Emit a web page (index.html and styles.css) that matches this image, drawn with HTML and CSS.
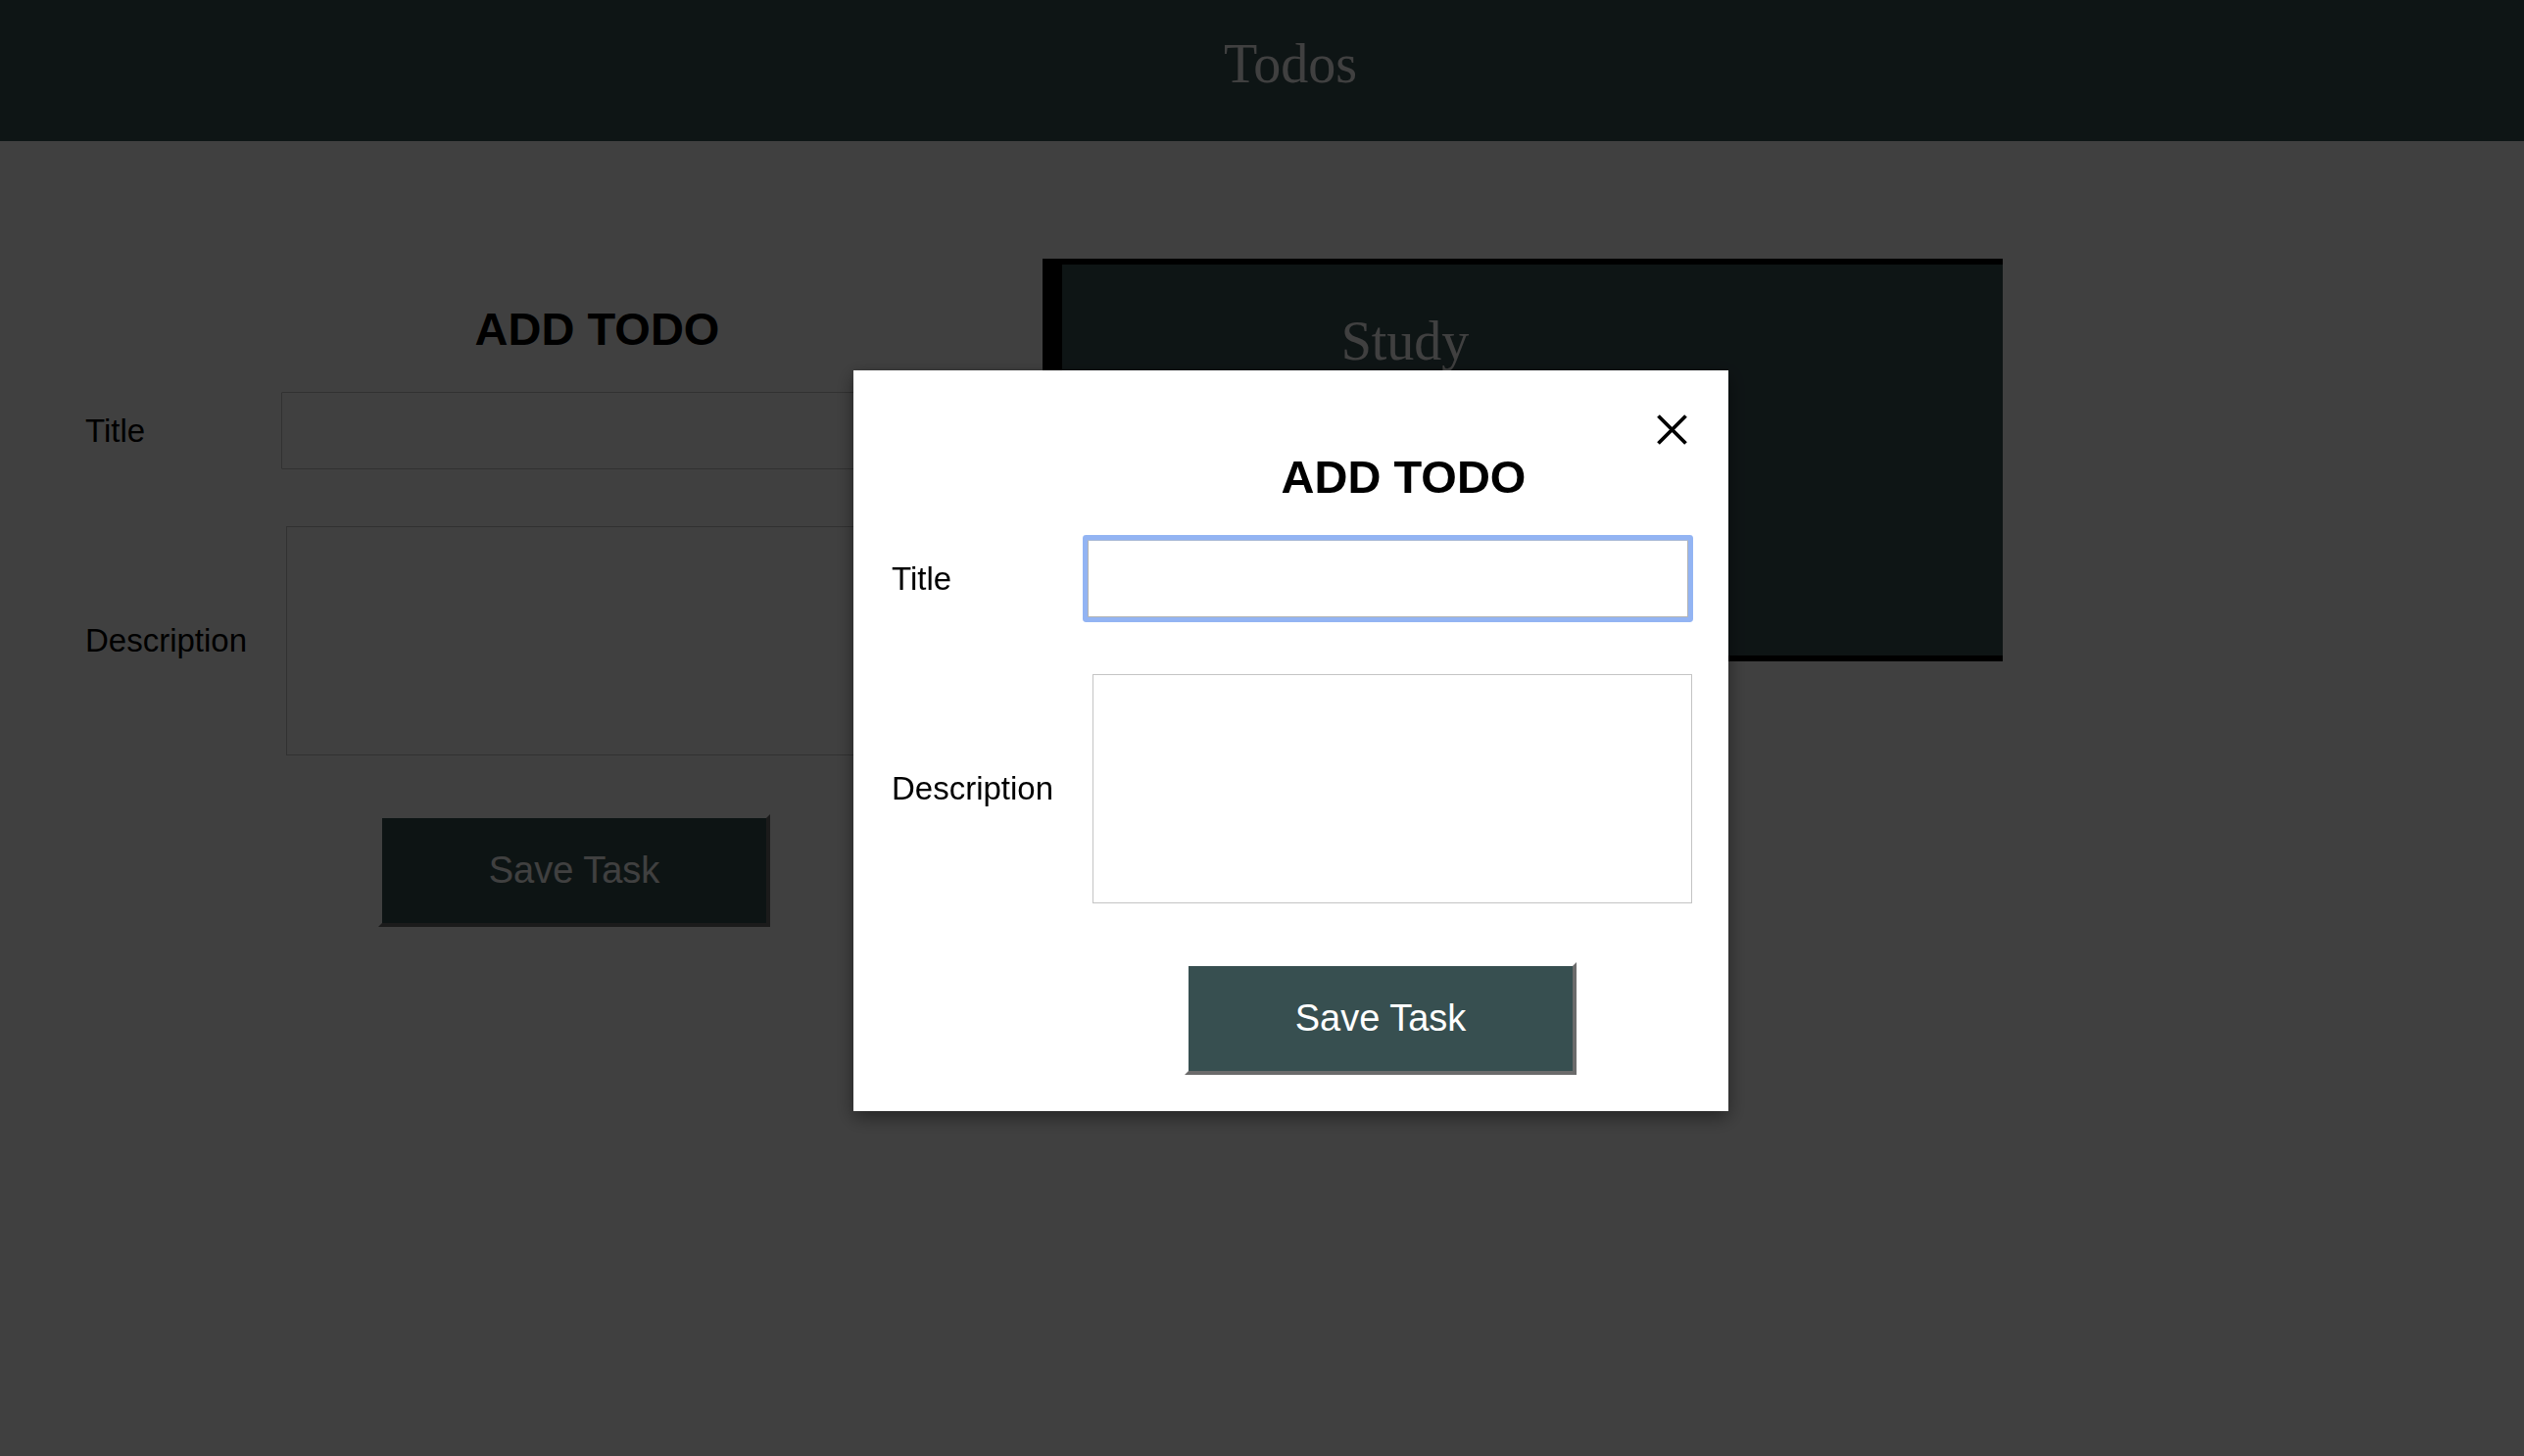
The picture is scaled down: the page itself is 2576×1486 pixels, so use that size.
FILE: index.html
```html
<!DOCTYPE html>
<html lang="en">
<head>
<meta charset="utf-8">
<title>Todos</title>
<link rel="stylesheet" href="styles.css">
</head>
<body>
<header class="app-header">
  <h1 class="app-title">Todos</h1>
</header>
<main class="content">
  <form class="todo-form">
    <h2 class="form-heading">ADD TODO</h2>
    <div class="form-row row-title">
      <label class="form-label">Title</label>
      <input class="title-input" type="text">
    </div>
    <div class="form-row row-desc">
      <label class="form-label">Description</label>
      <textarea class="desc-input"></textarea>
    </div>
    <button class="save-btn" type="button">Save Task</button>
  </form>
  <section class="todo-list">
    <article class="todo-card">
      <h3 class="todo-title">Study</h3>
    </article>
  </section>
</main>
<div class="overlay"></div>
<div class="modal">
  <button class="close-btn" type="button" aria-label="Close">
    <svg width="31" height="31" viewBox="0 0 31 31"><path d="M1.5 1.5 L29.5 29.5 M29.5 1.5 L1.5 29.5" stroke="#000" stroke-width="3.8" fill="none"/></svg>
  </button>
  <form class="todo-form">
    <h2 class="form-heading">ADD TODO</h2>
    <div class="form-row row-title">
      <label class="form-label">Title</label>
      <input class="title-input is-focused" type="text">
    </div>
    <div class="form-row row-desc">
      <label class="form-label">Description</label>
      <textarea class="desc-input"></textarea>
    </div>
    <button class="save-btn" type="button">Save Task</button>
  </form>
</div>
</body>
</html>
```

FILE: styles.css
```css
* { box-sizing: border-box; }

html, body {
  margin: 0;
  padding: 0;
  background: #ffffff;
  height: 100%;
  overflow: hidden;
}

body {
  font-family: "Liberation Sans", Arial, sans-serif;
  color: #000;
}

.app-header {
  height: 144px;
  background: #3b5356;
  padding: 33px 0 0 58px;
}

.app-title {
  margin: 0;
  font-family: "Liberation Serif", "Times New Roman", serif;
  font-weight: normal;
  font-size: 56px;
  line-height: 64px;
  color: #ffffff;
  text-align: center;
}

.content {
  display: flex;
  align-items: flex-start;
  gap: 123px;
  padding: 83px 0 0 48px;
}

.todo-form {
  width: 893px;
  flex: none;
  padding: 82px 0 37px 0;
  display: flex;
  flex-direction: column;
}

.form-heading {
  margin: 0 0 38px 0;
  padding-left: 230px;
  text-align: center;
  font-size: 47px;
  font-weight: bold;
  line-height: 53px;
}

.form-row {
  display: flex;
  align-items: center;
  padding-left: 39px;
}

.row-title { height: 79px; margin-bottom: 58px; }
.row-desc { height: 234px; margin-bottom: 60px; }

.form-label {
  width: 200px;
  flex: none;
  font-size: 33px;
  line-height: 38px;
}

.title-input {
  width: 613px;
  height: 79px;
  border: 1px solid #c4c4c4;
  border-radius: 1px;
  background: #fff;
  margin: 0;
  padding: 0 10px;
  font-size: 32px;
}

.title-input.is-focused {
  border-color: #a9b9d6 #b4b4b4 #b4b4b4 #b4b4b4;
  box-shadow: 0 0 0 5px #93b4f3;
  outline: none;
}

.desc-input {
  width: 612px;
  height: 234px;
  margin: 0 0 0 5px;
  border: 1px solid #c4c4c4;
  background: #fff;
  resize: none;
  padding: 0;
}

.save-btn {
  width: 400px;
  height: 115px;
  margin-left: 338px;
  align-self: flex-start;
  background: #374f50;
  color: #ffffff;
  font-family: "Liberation Sans", Arial, sans-serif;
  font-size: 38px;
  border-width: 4px;
  border-style: solid;
  border-color: #ffffff #6b6b6b #6b6b6b #ffffff;
  padding: 0;
  cursor: pointer;
}

.todo-list {
  margin-top: 37px;
  flex: none;
}

.todo-card {
  width: 980px;
  height: 411px;
  background: #3b5356;
  border-left: 20px solid #000;
  border-top: 6px solid #000;
  border-bottom: 6px solid #000;
  padding-top: 47px;
}

.todo-title {
  margin: 0;
  width: 700px;
  text-align: center;
  font-family: "Liberation Serif", "Times New Roman", serif;
  font-weight: normal;
  font-size: 56px;
  line-height: 62px;
  color: #ffffff;
}

.overlay {
  position: fixed;
  inset: 0;
  background: rgba(0, 0, 0, 0.75);
  z-index: 10;
}

.modal {
  position: fixed;
  left: 871px;
  top: 378px;
  width: 893px;
  height: 756px;
  background: #ffffff;
  box-shadow: 0 6px 18px rgba(0, 0, 0, 0.45);
  z-index: 20;
}

.close-btn {
  position: absolute;
  top: 45px;
  right: 42px;
  width: 31px;
  height: 31px;
  padding: 0;
  border: none;
  background: transparent;
  display: flex;
  align-items: center;
  justify-content: center;
  cursor: pointer;
}

.close-btn svg { display: block; }
```
